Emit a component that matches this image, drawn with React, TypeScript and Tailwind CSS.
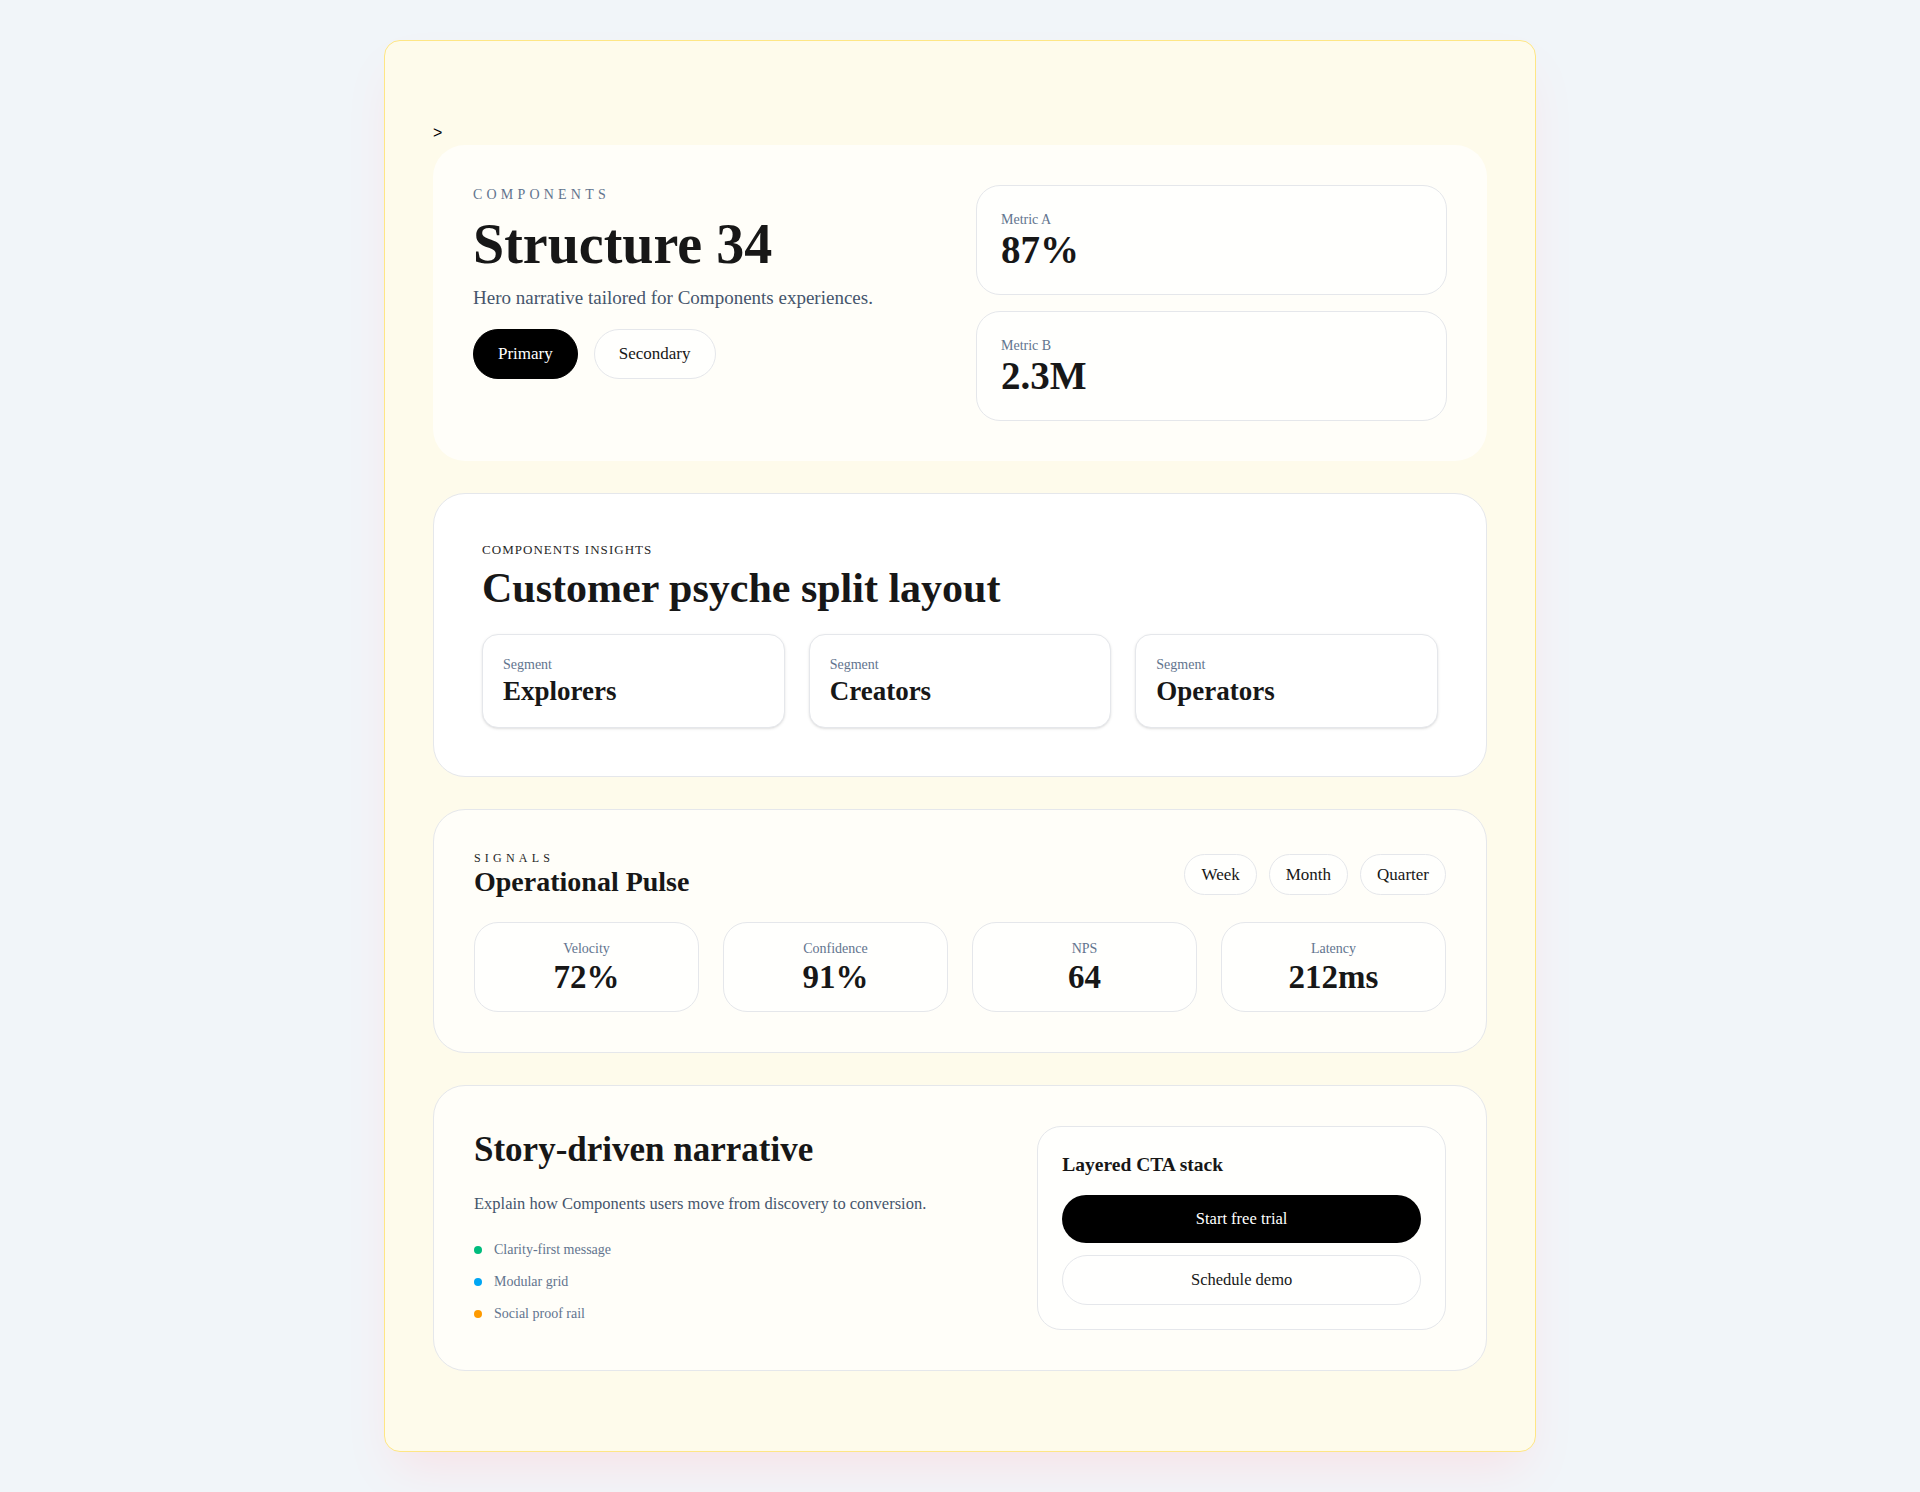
import React from 'react';

const metrics = [
  { label: 'Metric A', value: '87%' },
  { label: 'Metric B', value: '2.3M' },
];

const segments = ['Explorers', 'Creators', 'Operators'];

const ranges = ['Week', 'Month', 'Quarter'];

const signals = [
  { label: 'Velocity', value: '72%' },
  { label: 'Confidence', value: '91%' },
  { label: 'NPS', value: '64' },
  { label: 'Latency', value: '212ms' },
];

const bullets = [
  { text: 'Clarity-first message', dot: 'bg-emerald-500' },
  { text: 'Modular grid', dot: 'bg-sky-500' },
  { text: 'Social proof rail', dot: 'bg-amber-500' },
];

function Hero() {
  return (
    <section className="rounded-[32px] bg-white/70 p-10">
      <div className="grid grid-cols-2 gap-8">
        <div>
          <p className="text-[14px] leading-5 uppercase tracking-[0.3em] text-slate-500">Components</p>
          <h1 className="mt-3 text-[56px] leading-[55px] font-bold text-neutral-900">Structure 34</h1>
          <p className="mt-3 text-[19px] leading-7 text-slate-600">
            Hero narrative tailored for Components experiences.
          </p>
          <div className="mt-[17px] flex gap-4">
            <button className="rounded-full border border-black bg-black px-6 py-3 text-[17px] leading-6 text-white">
              Primary
            </button>
            <button className="rounded-full border border-gray-200 bg-white/60 px-6 py-3 text-[17px] leading-6 text-neutral-900">
              Secondary
            </button>
          </div>
        </div>
        <div className="flex flex-col gap-4">
          {metrics.map((m) => (
            <div key={m.label} className="rounded-3xl border border-gray-200 bg-white/70 p-6">
              <p className="text-[14px] leading-5 text-slate-500">{m.label}</p>
              <p className="text-[39px] leading-10 font-bold text-neutral-900">{m.value}</p>
            </div>
          ))}
        </div>
      </div>
    </section>
  );
}

function Insights() {
  return (
    <section className="rounded-[32px] border border-gray-200 bg-white p-12">
      <p className="text-[13px] leading-4 uppercase tracking-[0.08em] text-neutral-800">Components insights</p>
      <h2 className="mt-2 text-[42px] leading-[44px] font-bold text-neutral-900">Customer psyche split layout</h2>
      <div className="mt-6 grid grid-cols-3 gap-6">
        {segments.map((s) => (
          <div key={s} className="rounded-2xl border border-gray-200 bg-white p-5 shadow-sm">
            <p className="text-[14px] leading-5 text-slate-500">Segment</p>
            <p className="text-[27px] leading-8 font-bold text-neutral-900">{s}</p>
          </div>
        ))}
      </div>
    </section>
  );
}

function Pulse() {
  return (
    <section className="rounded-[32px] border border-gray-200 bg-white/70 p-10">
      <div className="flex items-center justify-between">
        <div>
          <p className="text-[12px] leading-4 uppercase tracking-[0.35em] text-neutral-800">Signals</p>
          <h3 className="text-[28px] leading-8 font-bold text-neutral-900">Operational Pulse</h3>
        </div>
        <div className="flex gap-3">
          {ranges.map((r) => (
            <button
              key={r}
              className="rounded-full border border-gray-200 bg-white/60 px-4 py-2 text-[17px] leading-[23px] text-neutral-900"
            >
              {r}
            </button>
          ))}
        </div>
      </div>
      <div className="mt-6 grid grid-cols-4 gap-6">
        {signals.map((s) => (
          <div key={s.label} className="rounded-3xl border border-gray-200 bg-white/70 px-4 py-4 text-center">
            <p className="text-[14px] leading-5 text-slate-500">{s.label}</p>
            <p className="text-[33px] leading-9 font-bold text-neutral-900">{s.value}</p>
          </div>
        ))}
      </div>
    </section>
  );
}

function Story() {
  return (
    <section className="rounded-[32px] border border-gray-200 bg-white/70 p-10">
      <div className="grid grid-cols-[1.3fr_1fr] gap-8">
        <div>
          <h3 className="text-[35px] leading-[48px] font-bold text-neutral-900">Story-driven narrative</h3>
          <p className="mt-[18px] text-[16.5px] leading-6 text-slate-600">
            Explain how Components users move from discovery to conversion.
          </p>
          <ul className="mt-6 flex flex-col gap-3">
            {bullets.map((b) => (
              <li key={b.text} className="flex items-center gap-3 text-[14px] leading-5 text-slate-500">
                <span className={`h-2 w-2 rounded-full ${b.dot}`} />
                {b.text}
              </li>
            ))}
          </ul>
        </div>
        <div className="rounded-3xl border border-gray-200 bg-white/70 p-6">
          <p className="text-[19.5px] leading-7 font-bold text-neutral-900">Layered CTA stack</p>
          <div className="mt-4 flex flex-col gap-3">
            <button className="w-full rounded-full bg-black py-3 text-[16.5px] leading-6 text-white">
              Start free trial
            </button>
            <button className="w-full rounded-full border border-gray-200 bg-white/60 py-3 text-[16.5px] leading-6 text-neutral-900">
              Schedule demo
            </button>
          </div>
        </div>
      </div>
    </section>
  );
}

export default function App() {
  return (
    <div className="min-h-screen bg-slate-100 py-10 font-['Liberation_Serif',serif]">
      <div className="mx-auto max-w-6xl rounded-2xl border border-amber-200 bg-[#fefbeb] px-12 pt-20 pb-20 shadow-2xl shadow-rose-200/50">
        <div>
          <div className="font-['Liberation_Sans',sans-serif] text-base leading-6 text-black">&gt;</div>
          <Hero />
        </div>
        <div className="mt-8 flex flex-col gap-8">
          <Insights />
          <Pulse />
          <Story />
        </div>
      </div>
    </div>
  );
}
